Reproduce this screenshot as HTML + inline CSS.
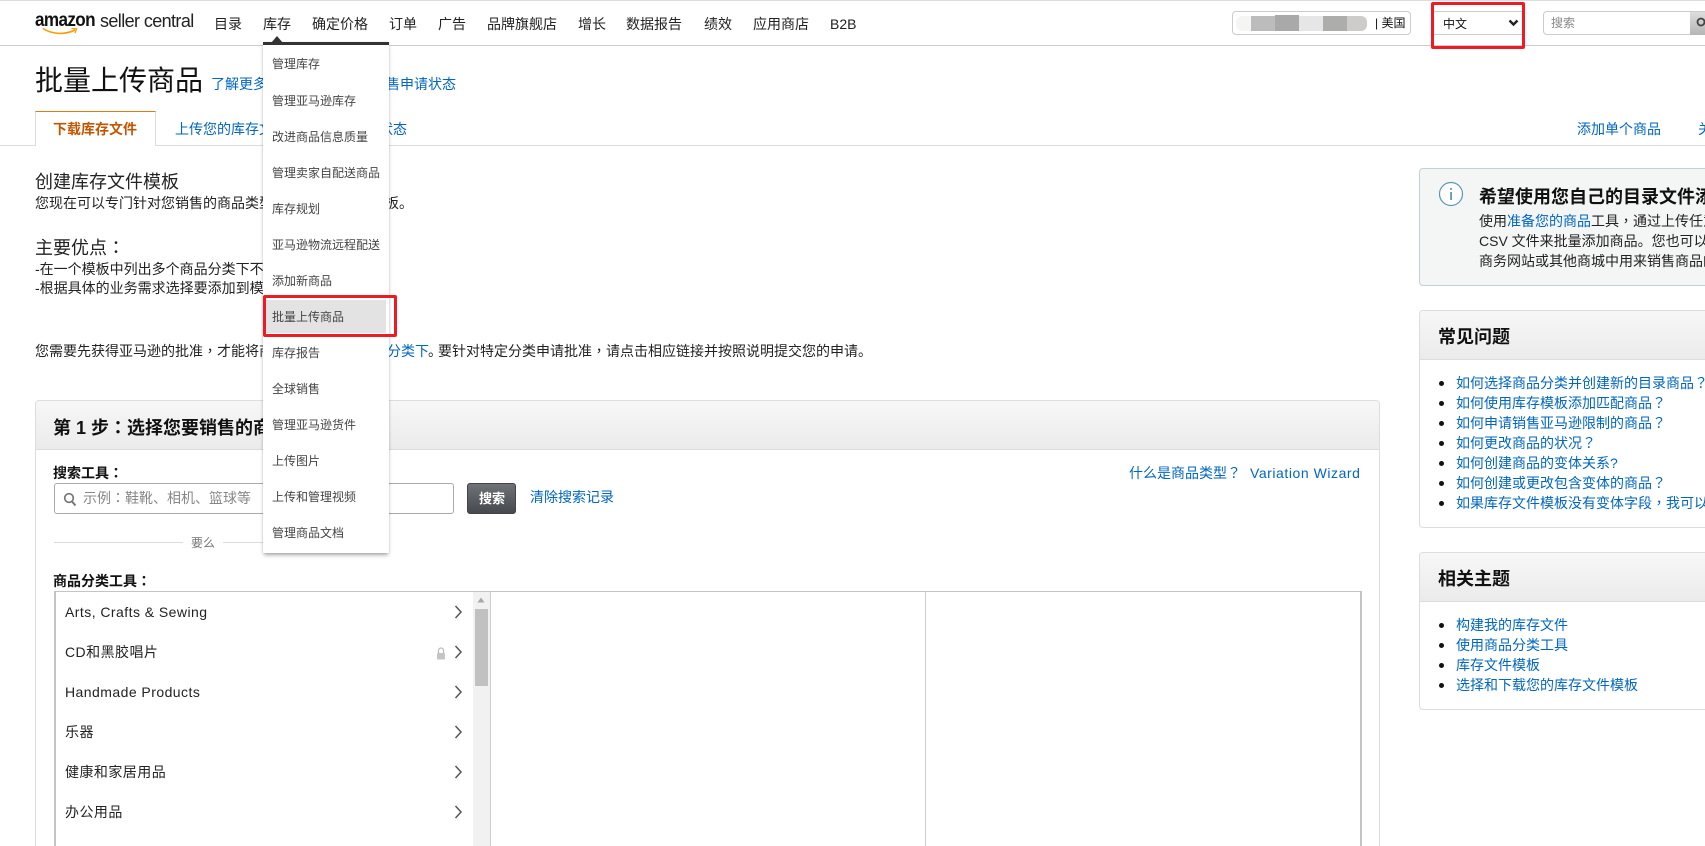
<!DOCTYPE html>
<html lang="zh-CN">
<head>
<meta charset="utf-8">
<title>批量上传商品</title>
<style>
html,body{margin:0;padding:0;background:#fff;width:1705px;height:846px;overflow:hidden}
body{position:relative;font-family:"Liberation Sans","Noto Sans CJK SC",sans-serif;font-size:14px;color:#111}
.a{position:absolute}
.t{position:absolute;white-space:nowrap;line-height:20px;height:20px}
.l{color:#0066c0}
.n{color:#222;font-size:14px}
.m{color:#444;font-size:12px;left:272px}
.b{font-weight:bold}
.h18{font-size:18px;line-height:24px;height:24px}
.box{position:absolute;border:1px solid #ddd;border-radius:4px;background:#fff;box-sizing:border-box}
.hd{position:absolute;left:0;top:0;right:0;background:linear-gradient(#f7f7f7,#ebebeb);border-bottom:1px solid #ddd;border-radius:3px 3px 0 0;box-sizing:border-box}
.dot{position:absolute;width:5px;height:5px;border-radius:50%;background:#111}
.row{color:#222;left:65px;letter-spacing:.45px}
.p{font-family:"Noto Sans CJK TC",sans-serif;font-style:normal;letter-spacing:0}
svg{position:absolute;display:block}
</style>
</head>
<body>
<div class="a" style="left:0;top:0;width:1705px;height:1px;background:#ddd"></div>
<div class="a" style="left:0;top:45px;width:1705px;height:1px;background:#ccc"></div>

<!-- logo -->
<div class="t b" style="left:35px;top:11px;font-size:19px;letter-spacing:-.7px;color:#111;transform:scaleX(.9);transform-origin:left center">amazon</div>
<div class="t" style="left:100px;top:11px;font-size:18px;letter-spacing:-.6px;color:#222">seller central</div>
<svg style="left:42px;top:27px" width="36" height="9" viewBox="0 0 36 9"><path d="M1 1.500C10 7.500 23 8 33 3" fill="none" stroke="#f90" stroke-width="1.600"/><path d="M29.500 1.500L34.500 1.800L33 6" fill="none" stroke="#f90" stroke-width="1.300"/></svg>

<!-- nav -->
<div class="t n" style="left:214px;top:14px">目录</div>
<div class="t n" style="left:263px;top:14px">库存</div>
<div class="t n" style="left:312px;top:14px">确定价格</div>
<div class="t n" style="left:389px;top:14px">订单</div>
<div class="t n" style="left:438px;top:14px">广告</div>
<div class="t n" style="left:487px;top:14px">品牌旗舰店</div>
<div class="t n" style="left:578px;top:14px">增长</div>
<div class="t n" style="left:626px;top:14px">数据报告</div>
<div class="t n" style="left:704px;top:14px">绩效</div>
<div class="t n" style="left:753px;top:14px">应用商店</div>
<div class="t n" style="left:830px;top:14px">B2B</div>

<!-- top right -->
<div class="box" style="left:1232px;top:11px;width:179px;height:24px;border-color:#ccc"></div>
<div class="a" style="left:1236px;top:16px;width:16px;height:15px;background:#f5f5f3;border-radius:6px 0 0 6px"></div>
<div class="a" style="left:1251px;top:16px;width:24px;height:15px;background:#bcbcbd"></div>
<div class="a" style="left:1275px;top:15px;width:24px;height:16px;background:#a9a9a9"></div>
<div class="a" style="left:1299px;top:16px;width:24px;height:15px;background:#e6e6e6"></div>
<div class="a" style="left:1323px;top:16px;width:24px;height:15px;background:#adaeac"></div>
<div class="a" style="left:1347px;top:16px;width:20px;height:15px;background:#ceccca;border-radius:0 6px 6px 0"></div>
<div class="t" style="left:1375px;top:13px;font-size:12px;color:#111">| 美国</div>

<div class="box" style="left:1431px;top:11px;width:92px;height:24px;border-color:#ccc;border-radius:0"></div>
<div class="t" style="left:1443px;top:14px;font-size:12px;color:#111">中文</div>
<svg style="left:1508px;top:19px" width="11" height="8" viewBox="0 0 11 8"><path d="M1.500 1.500L5.500 5.500L9.500 1.500" fill="none" stroke="#222" stroke-width="2.400"/></svg>
<div class="a" style="left:1431px;top:2px;width:94px;height:47px;border:3px solid #ed1c24;border-radius:2px;box-sizing:border-box"></div>

<div class="box" style="left:1543px;top:11px;width:170px;height:24px;border-color:#ccc"></div>
<div class="t" style="left:1551px;top:13px;font-size:12px;color:#888">搜索</div>
<div class="a" style="left:1690px;top:12px;width:15px;height:23px;background:linear-gradient(#ddd,#b5b5b5)"></div>
<svg style="left:1696px;top:17px" width="9" height="12" viewBox="0 0 9 12"><circle cx="5" cy="5" r="3.500" fill="none" stroke="#444" stroke-width="1.800"/></svg>

<!-- title -->
<div class="t" style="left:35px;top:61px;font-size:28px;line-height:40px;height:40px;color:#111">批量上传商品</div>
<div class="t l" style="left:211px;top:74px">了解更多信息</div>
<div class="t l" style="left:386px;top:74px">售申请状态</div>

<!-- tabs -->
<div class="a" style="left:0;top:145px;width:1705px;height:1px;background:#ddd"></div>
<div class="a" style="left:35px;top:111px;width:121px;height:35px;background:#fff;border:1px solid #ddd;border-bottom:0;border-top:1px solid #e47911;box-sizing:border-box"></div>
<div class="t b" style="left:53px;top:119px;color:#c45500">下载库存文件</div>
<div class="t l" style="left:175px;top:119px">上传您的库存文件</div>
<div class="t l" style="left:379px;top:119px">状态</div>
<div class="t l" style="left:1577px;top:119px">添加单个商品</div>
<div class="t l" style="left:1698px;top:119px">关</div>

<!-- intro -->
<div class="t h18" style="left:35px;top:170px;color:#222">创建库存文件模板</div>
<div class="t" style="left:35px;top:193px;color:#222">您现在可以专门针对您销售的商品类型</div>
<div class="t" style="left:385px;top:193px;color:#222">板<span style="letter-spacing:-4px">。</span></div>
<div class="t h18" style="left:35px;top:235px;color:#222">主要优点<i class="p" lang="zh-TW">：</i></div>
<div class="t" style="left:35px;top:259px;color:#222">-在一个模板中列出多个商品分类下不同</div>
<div class="t" style="left:35px;top:278px;color:#222">-根据具体的业务需求选择要添加到模板</div>
<div class="t" style="left:35px;top:341px;color:#222">您需要先获得亚马逊的批准<i class="p" lang="zh-TW">，</i>才能将商品</div>
<div class="t l" style="left:387px;top:341px">分类下</div>
<div class="t" style="left:428px;top:341px;color:#222"><span style="letter-spacing:-4px">。</span>要针对特定分类申请批准<i class="p" lang="zh-TW">，</i>请点击相应链接并按照说明提交您的申请。</div>

<!-- step box -->
<div class="box" style="left:35px;top:400px;width:1345px;height:460px">
  <div class="hd" style="height:49px"></div>
</div>
<div class="t b h18" style="left:53px;top:415px;color:#111">第 1 步<i class="p" lang="zh-TW">：</i>选择您要销售的商品类型</div>
<div class="t b" style="left:53px;top:463px;color:#111">搜索工具<i class="p" lang="zh-TW">：</i></div>
<div class="a" style="left:54px;top:483px;width:400px;height:31px;border:1px solid #aaa;border-radius:3px;box-sizing:border-box;background:#fff"></div>
<svg style="left:63px;top:492px" width="14" height="15" viewBox="0 0 14 15"><circle cx="6" cy="6" r="4.300" fill="none" stroke="#777" stroke-width="1.700"/><path d="M9 9.500L12.500 13.500" stroke="#777" stroke-width="2"/></svg>
<div class="t" style="left:83px;top:488px;color:#888">示例<i class="p" lang="zh-TW">：</i>鞋靴、相机、篮球等</div>
<div class="a" style="left:467px;top:483px;width:49px;height:31px;border:1px solid #444;border-radius:3px;box-sizing:border-box;background:linear-gradient(#6f7276,#46494d)"></div>
<div class="t b" style="left:479px;top:489px;color:#fff;font-size:13px">搜索</div>
<div class="t l" style="left:530px;top:487px">清除搜索记录</div>
<div class="t l" style="left:1129px;top:463px">什么是商品类型<i class="p" lang="zh-TW">？</i></div>
<div class="t l" style="left:1250px;top:463px;letter-spacing:.55px">Variation Wizard</div>

<div class="a" style="left:54px;top:542px;width:129px;height:1px;background:#ddd"></div>
<div class="t" style="left:191px;top:533px;font-size:12px;color:#777">要么</div>
<div class="a" style="left:223px;top:542px;width:40px;height:1px;background:#ddd"></div>

<div class="t b" style="left:53px;top:571px;color:#111">商品分类工具<i class="p" lang="zh-TW">：</i></div>

<!-- browse table -->
<div class="a" style="left:54px;top:591px;width:1308px;height:270px;border:1px solid #c4c4c4;border-left-width:2px;border-right-width:2px;box-sizing:border-box"></div>
<div class="a" style="left:473px;top:592px;width:17px;height:254px;background:#f1f1f1"></div>
<div class="a" style="left:475px;top:609px;width:13px;height:77px;background:#c1c1c1"></div>
<svg style="left:477px;top:597px" width="8" height="6" viewBox="0 0 8 6"><path d="M4 .5L7.500 5.500H.5Z" fill="#a8a8a8"/></svg>
<div class="a" style="left:490px;top:592px;width:1px;height:254px;background:#ccc"></div>
<div class="a" style="left:925px;top:592px;width:1px;height:254px;background:#ccc"></div>

<div class="t row" style="top:602px">Arts, Crafts &amp; Sewing</div>
<div class="t row" style="top:642px">CD和黑胶唱片</div>
<div class="t row" style="top:682px">Handmade Products</div>
<div class="t row" style="top:722px">乐器</div>
<div class="t row" style="top:762px">健康和家居用品</div>
<div class="t row" style="top:802px">办公用品</div>
<svg style="left:454px;top:605px" width="9" height="14" viewBox="0 0 9 14"><path d="M1.500 1L7 7L1.500 13" fill="none" stroke="#555" stroke-width="1.500"/></svg>
<svg style="left:454px;top:645px" width="9" height="14" viewBox="0 0 9 14"><path d="M1.500 1L7 7L1.500 13" fill="none" stroke="#555" stroke-width="1.500"/></svg>
<svg style="left:454px;top:685px" width="9" height="14" viewBox="0 0 9 14"><path d="M1.500 1L7 7L1.500 13" fill="none" stroke="#555" stroke-width="1.500"/></svg>
<svg style="left:454px;top:725px" width="9" height="14" viewBox="0 0 9 14"><path d="M1.500 1L7 7L1.500 13" fill="none" stroke="#555" stroke-width="1.500"/></svg>
<svg style="left:454px;top:765px" width="9" height="14" viewBox="0 0 9 14"><path d="M1.500 1L7 7L1.500 13" fill="none" stroke="#555" stroke-width="1.500"/></svg>
<svg style="left:454px;top:805px" width="9" height="14" viewBox="0 0 9 14"><path d="M1.500 1L7 7L1.500 13" fill="none" stroke="#555" stroke-width="1.500"/></svg>
<svg style="left:436px;top:647px" width="10" height="13" viewBox="0 0 10 13"><path d="M2.500 6V3.500a2.500 2.500 0 0 1 5 0V6" fill="none" stroke="#bbb" stroke-width="1.200"/><rect x="1" y="6" width="8" height="6.500" rx="1" fill="#c4c4c4"/></svg>

<!-- info box -->
<div class="box" style="left:1419px;top:168px;width:300px;height:118px;background:#f4f5f5;border-color:#c2d0d8"></div>
<svg style="left:1438px;top:181px" width="26" height="26" viewBox="0 0 26 26"><circle cx="13" cy="13" r="11.500" fill="#fff" stroke="#5a97b5" stroke-width="1.200"/><rect x="12.300" y="7" width="1.500" height="1.800" fill="#3a84a8"/><rect x="12.300" y="11" width="1.500" height="8" fill="#3a84a8"/></svg>
<div class="t b h18" style="left:1479px;top:185px;color:#111">希望使用您自己的目录文件添加商品</div>
<div class="t" style="left:1479px;top:211px;color:#222">使用<span class="l">准备您的商品</span>工具<i class="p" lang="zh-TW">，</i>通过上传任意</div>
<div class="t" style="left:1479px;top:231px;color:#222">CSV 文件来批量添加商品。您也可以从</div>
<div class="t" style="left:1479px;top:251px;color:#222">商务网站或其他商城中用来销售商品的</div>

<!-- FAQ -->
<div class="box" style="left:1419px;top:310px;width:300px;height:218px">
  <div class="hd" style="height:49px"></div>
</div>
<div class="t b h18" style="left:1438px;top:325px;color:#111">常见问题</div>
<div class="dot" style="left:1439px;top:381px"></div><div class="t l" style="left:1456px;top:373px">如何选择商品分类并创建新的目录商品<i class="p" lang="zh-TW">？</i></div>
<div class="dot" style="left:1439px;top:401px"></div><div class="t l" style="left:1456px;top:393px">如何使用库存模板添加匹配商品<i class="p" lang="zh-TW">？</i></div>
<div class="dot" style="left:1439px;top:421px"></div><div class="t l" style="left:1456px;top:413px">如何申请销售亚马逊限制的商品<i class="p" lang="zh-TW">？</i></div>
<div class="dot" style="left:1439px;top:441px"></div><div class="t l" style="left:1456px;top:433px">如何更改商品的状况<i class="p" lang="zh-TW">？</i></div>
<div class="dot" style="left:1439px;top:461px"></div><div class="t l" style="left:1456px;top:453px">如何创建商品的变体关系?</div>
<div class="dot" style="left:1439px;top:481px"></div><div class="t l" style="left:1456px;top:473px">如何创建或更改包含变体的商品<i class="p" lang="zh-TW">？</i></div>
<div class="dot" style="left:1439px;top:501px"></div><div class="t l" style="left:1456px;top:493px">如果库存文件模板没有变体字段<i class="p" lang="zh-TW">，</i>我可以创建</div>

<!-- related -->
<div class="box" style="left:1419px;top:552px;width:300px;height:158px">
  <div class="hd" style="height:49px"></div>
</div>
<div class="t b h18" style="left:1438px;top:567px;color:#111">相关主题</div>
<div class="dot" style="left:1439px;top:623px"></div><div class="t l" style="left:1456px;top:615px">构建我的库存文件</div>
<div class="dot" style="left:1439px;top:643px"></div><div class="t l" style="left:1456px;top:635px">使用商品分类工具</div>
<div class="dot" style="left:1439px;top:663px"></div><div class="t l" style="left:1456px;top:655px">库存文件模板</div>
<div class="dot" style="left:1439px;top:683px"></div><div class="t l" style="left:1456px;top:675px">选择和下载您的库存文件模板</div>

<!-- dropdown menu -->
<div class="a" style="left:263px;top:42px;width:126px;height:511px;background:#fff;box-shadow:0 3px 4px -1px rgba(0,0,0,.35),0 0 2px rgba(0,0,0,.1)"></div>
<div class="a" style="left:263px;top:42px;width:126px;height:3px;background:#333"></div>
<svg style="left:270px;top:36px" width="14" height="7" viewBox="0 0 14 7"><path d="M7 0L13 7H1Z" fill="#333"/></svg>
<div class="a" style="left:266px;top:300px;width:120px;height:33px;background:#e3e3e3"></div>
<div class="t m" style="top:54px">管理库存</div>
<div class="t m" style="top:91px">管理亚马逊库存</div>
<div class="t m" style="top:127px">改进商品信息质量</div>
<div class="t m" style="top:163px">管理卖家自配送商品</div>
<div class="t m" style="top:199px">库存规划</div>
<div class="t m" style="top:235px">亚马逊物流远程配送</div>
<div class="t m" style="top:271px">添加新商品</div>
<div class="t m" style="top:307px">批量上传商品</div>
<div class="t m" style="top:343px">库存报告</div>
<div class="t m" style="top:379px">全球销售</div>
<div class="t m" style="top:415px">管理亚马逊货件</div>
<div class="t m" style="top:451px">上传图片</div>
<div class="t m" style="top:487px">上传和管理视频</div>
<div class="t m" style="top:523px">管理商品文档</div>
<div class="a" style="left:263px;top:295px;width:134px;height:42px;border:3px solid #ed1c24;border-radius:2px;box-sizing:border-box"></div>
</body>
</html>
